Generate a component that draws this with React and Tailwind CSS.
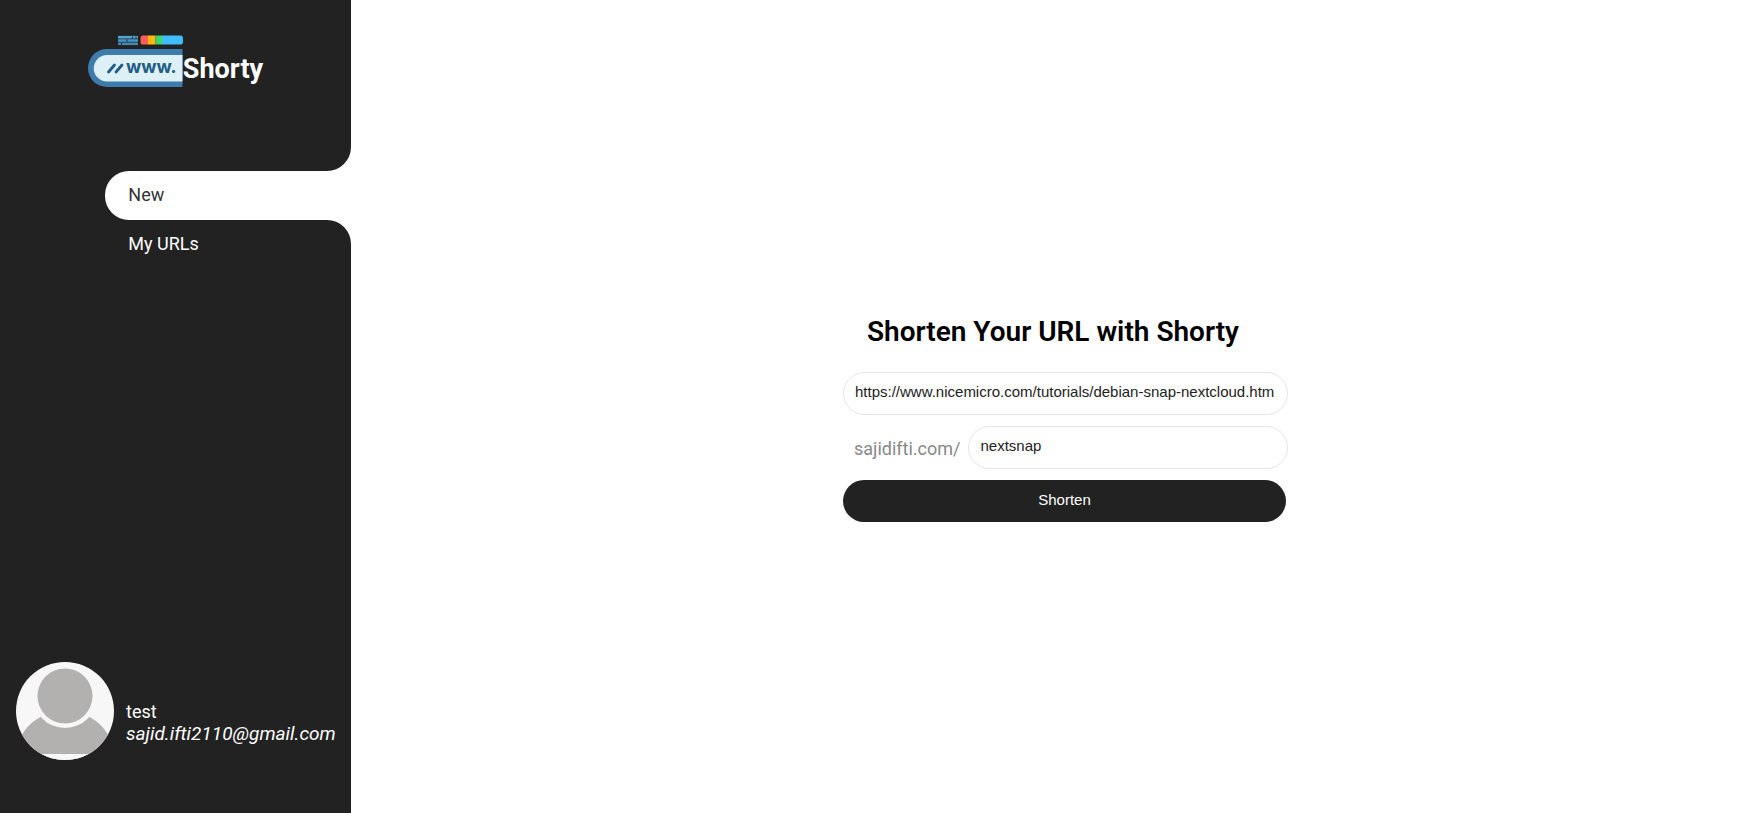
import { useState } from "react";

function LogoMark() {
  return (
    <svg width="95" height="52" viewBox="0 0 95 52" aria-hidden="true">
      <g fill="none" strokeWidth="2.6">
        <path d="M30 2.2H50" stroke="#50a8d8" />
        <path d="M30 5.5H50" stroke="#4395c6" />
        <path d="M30 8.8H50" stroke="#4389b5" />
      </g>
      <path d="M44.500 1.500v2M48 1.500v2M33.500 7.800v2M39 4.500v2" stroke="#222222" strokeWidth="1" />
      <path d="M54.500 0.500H60V9.500H54.500Q52.500 9.500 52.500 7V3Q52.500 0.500 54.500 0.500Z" fill="#ff6156" />
      <path d="M60 0.500H67.500V9.500H60Z" fill="#ffb80e" />
      <path d="M67.500 0.500H74V9.500H67.500Z" fill="#3fd568" />
      <path d="M74 0.500H93Q95 0.500 95 3V7Q95 9.500 93 9.500H74Z" fill="#41bcfd" />
      <path d="M19 14H94.500V52H19A19 19 0 0 1 19 14Z" fill="#3e7cac" />
      <path d="M19 20H94.500V46.500H19A13.200 13.200 0 0 1 19 20Z" fill="#dcf0f6" />
      <path d="M20.500 37L26.500 30M28 37L34 30" stroke="#215c84" strokeWidth="2.8" strokeLinecap="round" />
      <text x="38" y="38" fill="#215c84" className="font-['Inter',sans-serif] text-[18px] font-bold">
        www.
      </text>
    </svg>
  );
}

function Avatar() {
  return (
    <svg className="w-[98px] shrink-0 rounded-full" viewBox="0 0 98 98" role="img" aria-label="Profile">
      <rect width="98" height="98" fill="#f7f7f7" />
      <ellipse cx="49" cy="92" rx="48" ry="43" fill="#b2b1b0" />
      <rect y="92" width="98" height="6" fill="#f7f7f7" />
      <circle cx="49" cy="34" r="32" fill="#f7f7f7" />
      <circle cx="49" cy="34" r="27.500" fill="#b2b1b0" />
    </svg>
  );
}

function Sidebar() {
  return (
    <aside className="flex w-1/5 shrink-0 flex-col bg-white text-lg text-white">
      <div className="flex h-[171px] items-start justify-center rounded-br-3xl bg-[#222222] pt-[35px]">
        <LogoMark />
        <span className="pt-[18px] text-[27px] leading-8 font-bold">Shorty</span>
      </div>
      <nav className="flex grow flex-col">
        <div className="bg-[#222222] pl-[30%]">
          <a href="#new" aria-current="page" className="flex h-[49px] items-center rounded-l-3xl bg-white pb-[2px] pl-[23px] text-[#333333]">
            New
          </a>
        </div>
        <div className="grow rounded-tr-3xl bg-[#222222] pl-[30%]">
          <a href="#urls" className="flex h-[49px] items-center pb-[2px] pl-[23px]">
            My URLs
          </a>
        </div>
      </nav>
      <div className="flex items-center gap-3 bg-[#222222] pb-[53px] pl-4">
        <Avatar />
        <div className="pt-6 leading-[22px]">
          <p>test</p>
          <p className="text-[19px] leading-[22px] italic">sajid.ifti2110@gmail.com</p>
        </div>
      </div>
    </aside>
  );
}

const field =
  "h-[43px] min-w-0 grow rounded-full border border-[#e5e5e5] bg-white px-[11px] pb-[3px] font-['Liberation_Sans',sans-serif] text-[15px] text-[#222222] outline-none";

function ShortenForm() {
  const [url, setUrl] = useState("https://www.nicemicro.com/tutorials/debian-snap-nextcloud.htm");
  const [slug, setSlug] = useState("nextsnap");
  return (
    <form className="w-[420px]" onSubmit={(e) => e.preventDefault()}>
      <h1 className="text-center text-[28px] leading-8 font-semibold text-black">Shorten Your URL with Shorty</h1>
      <div className="mt-6 flex w-[445px] flex-col gap-[11px]">
        <div className="flex">
          <input aria-label="Long URL" className={field} value={url} onChange={(e) => setUrl(e.target.value)} />
        </div>
        <div className="flex items-center">
          <label htmlFor="slug" className="pt-1 pr-2 pl-[11px] text-lg text-[#888888]">
            sajidifti.com/
          </label>
          <input id="slug" className={field} value={slug} onChange={(e) => setSlug(e.target.value)} />
        </div>
        <button
          type="submit"
          className="mr-[2px] h-[42px] rounded-full bg-[#222222] font-['Liberation_Sans',sans-serif] text-[15px] text-white"
        >
          Shorten
        </button>
      </div>
    </form>
  );
}

export default function App() {
  return (
    <div className="flex min-h-screen bg-white font-['Roboto',sans-serif]">
      <Sidebar />
      <main className="flex grow items-center justify-center pt-6">
        <ShortenForm />
      </main>
    </div>
  );
}
